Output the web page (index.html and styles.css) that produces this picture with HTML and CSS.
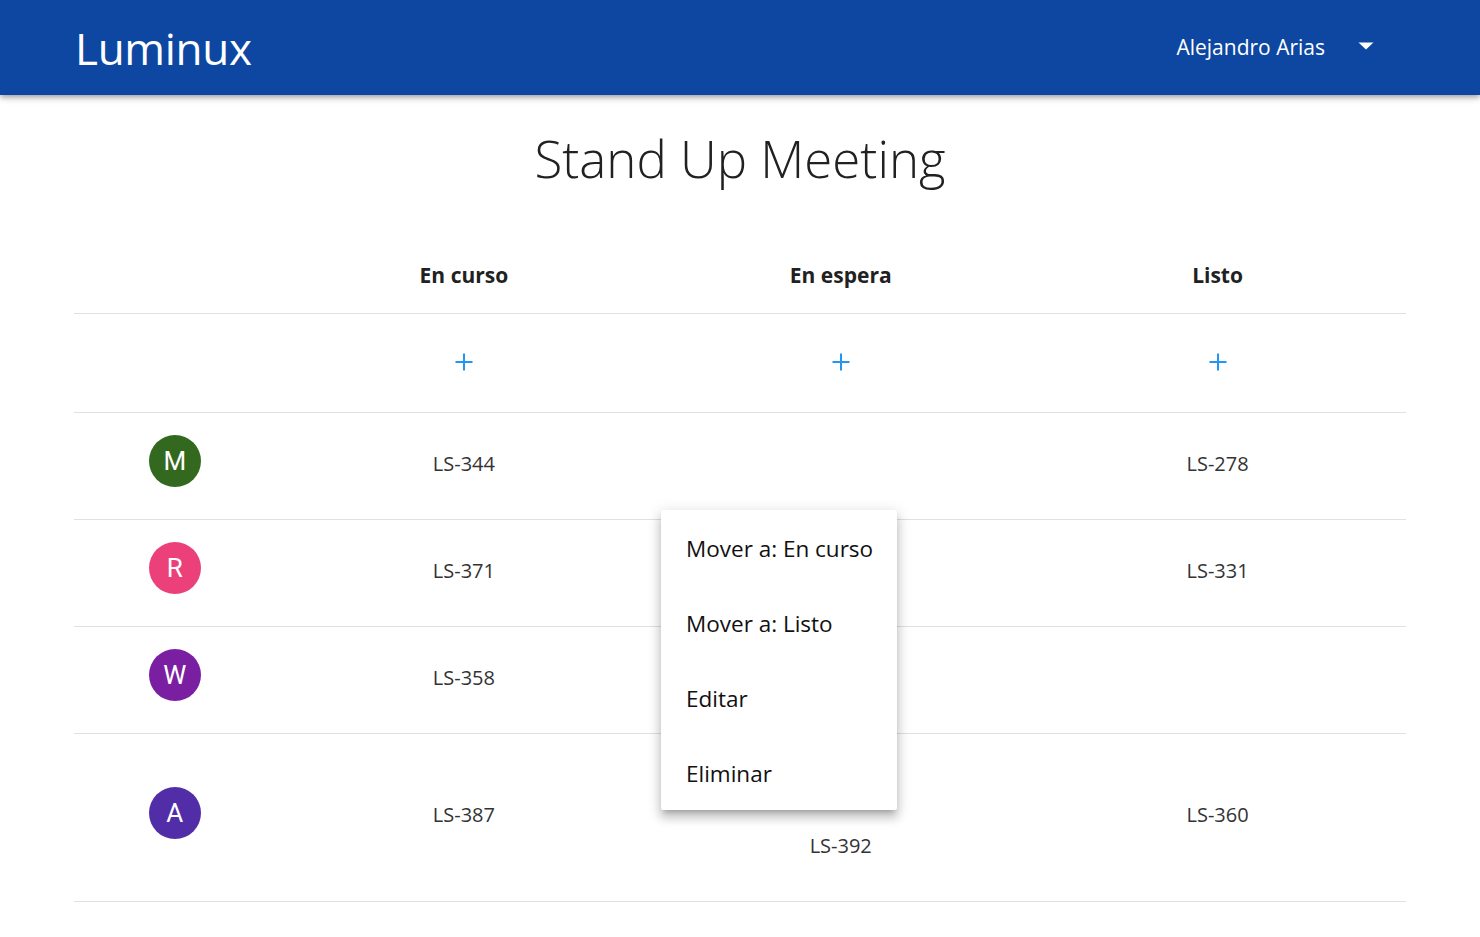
FILE: index.html
```html
<!DOCTYPE html>
<html lang="es">
<head>
<meta charset="utf-8">
<title>Luminux - Stand Up Meeting</title>
<link rel="stylesheet" href="styles.css">
</head>
<body>
<header class="appbar">
  <div class="brand">Luminux</div>
  <button class="user" type="button">
    <span class="user-name">Alejandro Arias</span>
    <svg class="caret" width="16" height="8" viewBox="0 0 16 8"><path d="M0.5 0.5 H15.5 L8 7.5 Z" fill="#fff"/></svg>
  </button>
</header>

<main class="page">
  <h1 class="title">Stand Up Meeting</h1>

  <div class="board">
    <div class="row head">
      <div class="cell"></div>
      <div class="cell">En curso</div>
      <div class="cell">En espera</div>
      <div class="cell">Listo</div>
    </div>

    <div class="row add">
      <div class="cell"></div>
      <div class="cell"><button class="plus" type="button" aria-label="Añadir"><svg width="18" height="18" viewBox="0 0 18 18"><path d="M9 0.5 V17.5 M0.5 9 H17.5" stroke="#2196f3" stroke-width="2" fill="none"/></svg></button></div>
      <div class="cell"><button class="plus" type="button" aria-label="Añadir"><svg width="18" height="18" viewBox="0 0 18 18"><path d="M9 0.5 V17.5 M0.5 9 H17.5" stroke="#2196f3" stroke-width="2" fill="none"/></svg></button></div>
      <div class="cell"><button class="plus" type="button" aria-label="Añadir"><svg width="18" height="18" viewBox="0 0 18 18"><path d="M9 0.5 V17.5 M0.5 9 H17.5" stroke="#2196f3" stroke-width="2" fill="none"/></svg></button></div>
    </div>

    <div class="row member">
      <div class="cell"><span class="avatar green">M</span></div>
      <div class="cell"><div class="item">LS-344</div></div>
      <div class="cell"></div>
      <div class="cell"><div class="item">LS-278</div></div>
    </div>

    <div class="row member">
      <div class="cell"><span class="avatar pink">R</span></div>
      <div class="cell"><div class="item">LS-371</div></div>
      <div class="cell"></div>
      <div class="cell"><div class="item">LS-331</div></div>
    </div>

    <div class="row member">
      <div class="cell"><span class="avatar purple">W</span></div>
      <div class="cell"><div class="item">LS-358</div></div>
      <div class="cell"></div>
      <div class="cell"></div>
    </div>

    <div class="row member">
      <div class="cell"><span class="avatar deep">A</span></div>
      <div class="cell"><div class="item">LS-387</div></div>
      <div class="cell"><div class="item">LS-389</div><div class="item">LS-392</div></div>
      <div class="cell"><div class="item">LS-360</div></div>
    </div>
  </div>
</main>

<ul class="menu">
  <li class="menu-item">Mover a: En curso</li>
  <li class="menu-item">Mover a: Listo</li>
  <li class="menu-item">Editar</li>
  <li class="menu-item">Eliminar</li>
</ul>
</body>
</html>
```

FILE: styles.css
```css
* { box-sizing: border-box; }

body {
  margin: 0;
  font-family: "Open Sans", "Noto Sans", "Liberation Sans", sans-serif;
  color: #212121;
  background: #fff;
}

.appbar {
  height: 95px;
  background: #0d47a1;
  color: #fff;
  display: flex;
  align-items: center;
  justify-content: space-between;
  padding: 0 98px 0 75px;
  box-shadow: 0 2px 4px -1px rgba(0,0,0,.2), 0 4px 5px 0 rgba(0,0,0,.14), 0 1px 10px 0 rgba(0,0,0,.12);
  position: relative;
  z-index: 1;
}

.brand {
  font-size: 44px;
  line-height: 1;
  margin-top: 1px;
  letter-spacing: -0.3px;
}

.user {
  display: flex;
  align-items: center;
  gap: 33px;
  background: none;
  border: 0;
  color: #fff;
  font-family: inherit;
  font-size: 21px;
  padding: 8px;
  margin-top: -1px;
}

.caret { display: block; margin-top: -2px; }

.page {
  padding: 0 74px;
}

.title {
  margin: 32px 0 51px;
  text-align: center;
  font-size: 51px;
  line-height: 62px;
  font-weight: 300;
  color: #212121;
}

.board {
  display: flex;
  flex-direction: column;
}

.row {
  display: grid;
  grid-template-columns: 201.5px repeat(3, 1fr);
  border-bottom: 1px solid #e0e0e0;
}

.cell {
  display: flex;
  flex-direction: column;
  align-items: center;
  justify-content: center;
}

.head { height: 74px; padding-bottom: 4px; }
.head .cell {
  font-size: 21px;
  font-weight: 700;
  color: #212121;
}

.add { height: 99px; }

.plus {
  background: none;
  border: 0;
  padding: 0;
  width: 18px;
  height: 18px;
  margin-top: -2px;
}
.plus svg { display: block; }

.member { padding: 22px 0; }

.item {
  height: 62px;
  display: flex;
  align-items: center;
  font-size: 20px;
  color: #333;
  padding-bottom: 6px;
}
.item + .item { margin-top: -1px; }

.avatar {
  width: 52px;
  height: 52px;
  border-radius: 50%;
  color: #fff;
  display: flex;
  align-items: center;
  justify-content: center;
  font-family: Roboto, "Liberation Sans", sans-serif;
  font-size: 26px;
  margin-bottom: 10px;
}
.green { background: #33691e; }
.pink { background: #ec407a; }
.purple { background: #7b1fa2; }
.deep { background: #512da8; }

.menu {
  position: absolute;
  left: 661px;
  top: 510px;
  width: 236px;
  margin: 0;
  padding: 0;
  list-style: none;
  background: #fff;
  border-radius: 2px;
  box-shadow: 0 5px 5px -3px rgba(0,0,0,.2), 0 8px 10px 1px rgba(0,0,0,.14), 0 3px 14px 2px rgba(0,0,0,.12);
  z-index: 2;
}

.menu-item {
  height: 75px;
  display: flex;
  align-items: center;
  padding: 1px 0 0 25px;
  font-size: 22.5px;
  color: #111;
  white-space: nowrap;
}
```
